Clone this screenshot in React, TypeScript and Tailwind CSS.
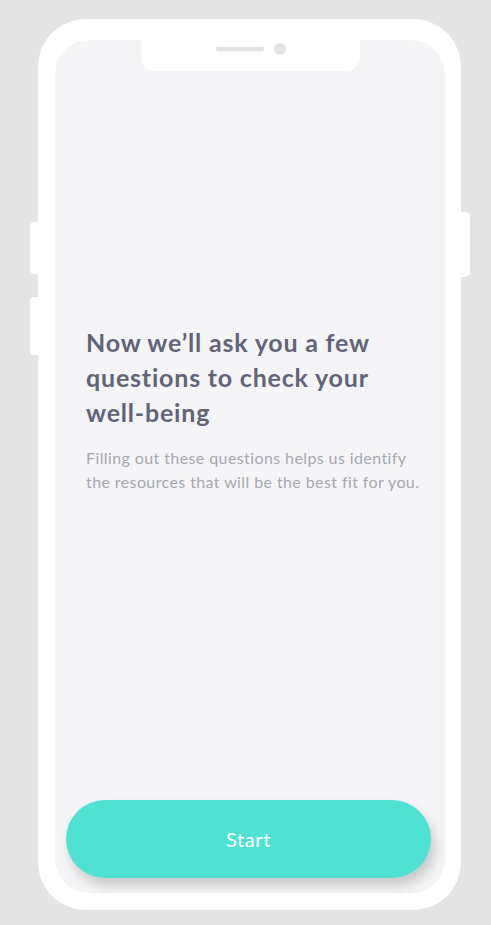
import React from "react";

export default function App() {
  return (
    <div className="w-[491px] h-[925px] bg-[#e4e4e4] pt-[19px] pl-[38px] overflow-hidden" style={{ fontFamily: "Lato, 'Open Sans', sans-serif" }}>
      <div className="relative w-[423px] h-[891px] rounded-[48px] bg-white pt-[21px] pl-[17px]">
        {/* side buttons */}
        <div className="absolute left-[-8px] top-[203px] w-[9px] h-[52px] rounded-l-[4px] bg-white" />
        <div className="absolute left-[-8px] top-[278px] w-[9px] h-[58px] rounded-l-[4px] bg-white" />
        <div className="absolute right-[-9px] top-[193px] w-[10px] h-[65px] rounded-r-[5px] bg-white" />
        <div className="relative w-[390px] h-[853px] rounded-[34px] bg-[#f5f5f7] flex flex-col">
          {/* notch */}
          <div className="absolute left-[86px] top-[-21px] w-[219px] h-[52px] bg-white rounded-b-[14px] flex items-center justify-center gap-[10px] pt-[8px]">
            <div className="w-[48px] h-[4px] rounded-full bg-[#e0e0e0]" />
            <div className="w-[12px] h-[12px] rounded-full bg-[#e3e3e3]" />
          </div>
          <div className="pt-[285px] pl-[31px] pr-[10px] flex-1">
            <h1 className="text-[25px] leading-[35px] font-bold text-[#626479] tracking-[0.8px]">
              Now we’ll ask you a few
              <br />
              questions to check your
              <br />
              well-being
            </h1>
            <p className="mt-[16px] text-[16px] leading-[24px] text-[#a7a8b1] tracking-[0.4px]">
              Filling out these questions helps us identify
              <br />
              the resources that will be the best fit for you.
            </p>
          </div>
          <div className="pl-[11px] pr-[14px] pb-[15px]">
            <button className="w-full h-[78px] rounded-full bg-[#4fe2d2] text-white text-[20px] tracking-[0.6px] shadow-[4px_8px_12px_rgba(0,0,0,0.18)]">
              Start
            </button>
          </div>
        </div>
      </div>
    </div>
  );
}
